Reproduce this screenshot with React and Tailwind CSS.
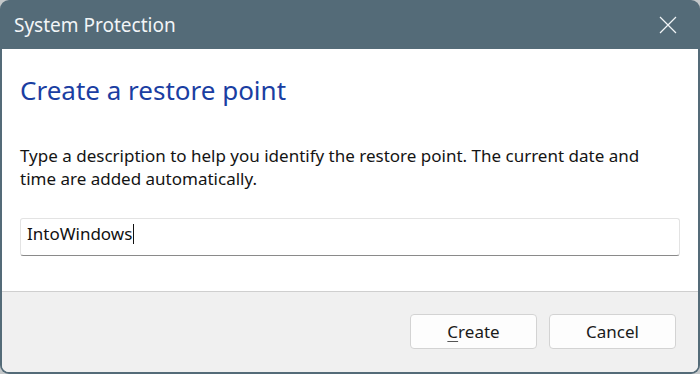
import React from 'react';

export default function App() {
  return (
    <div className="w-[700px] h-[374px] bg-[#c4c8ca] font-['Noto_Sans',sans-serif]">
      <div className="w-full h-full bg-[#546b78] rounded-[9px] overflow-hidden flex flex-col px-[2px] pb-[2px]">
        {/* title bar */}
        <div className="h-[49px] shrink-0 flex items-center justify-between pl-[12px] pr-[21px]">
          <span className="text-[19px] text-[#f2f5f7] leading-none pt-[1px]">System Protection</span>
          <svg width="18" height="18" viewBox="0 0 18 18" className="text-[#f2f5f7]">
            <path d="M1 1 L17 17 M17 1 L1 17" stroke="currentColor" strokeWidth="1.2" fill="none" />
          </svg>
        </div>

        {/* body */}
        <div className="flex-1 flex flex-col bg-white rounded-b-[7px] overflow-hidden">
          <div className="h-[242px] shrink-0 px-[18px] pt-[24px]">
            <h1 className="text-[26px] text-[#1a3ea2] leading-[34px]">Create a restore point</h1>
            <p className="mt-[37px] w-[645px] text-[17px] text-[#141414] leading-[23px]">
              Type a description to help you identify the restore point. The current date and time are added automatically.
            </p>
            <div className="mt-[28px] h-[38px] border border-[#e3e3e3] border-b-[#8a8a8a] rounded-[3px] flex items-center pl-[6px] pb-[7px]">
              <span className="text-[17px] text-[#111] leading-none">IntoWindows</span>
              <span className="w-px h-[20px] bg-[#111] ml-px" />
            </div>
          </div>
          <div className="flex-1 bg-[#f0f0f0] border-t border-[#cfcfcf] flex items-start justify-end gap-[12px] pt-[22px] pr-[22px]">
            <button className="w-[127px] h-[35px] rounded-[4px] border border-[#d3d3d3] bg-[#fdfdfd] text-[17px] text-[#1a1a1a] leading-none">
              <span className="underline underline-offset-[3px] decoration-[#555]">C</span>reate
            </button>
            <button className="w-[127px] h-[35px] rounded-[4px] border border-[#d3d3d3] bg-[#fdfdfd] text-[17px] text-[#1a1a1a] leading-none">
              Cancel
            </button>
          </div>
        </div>
      </div>
    </div>
  );
}
